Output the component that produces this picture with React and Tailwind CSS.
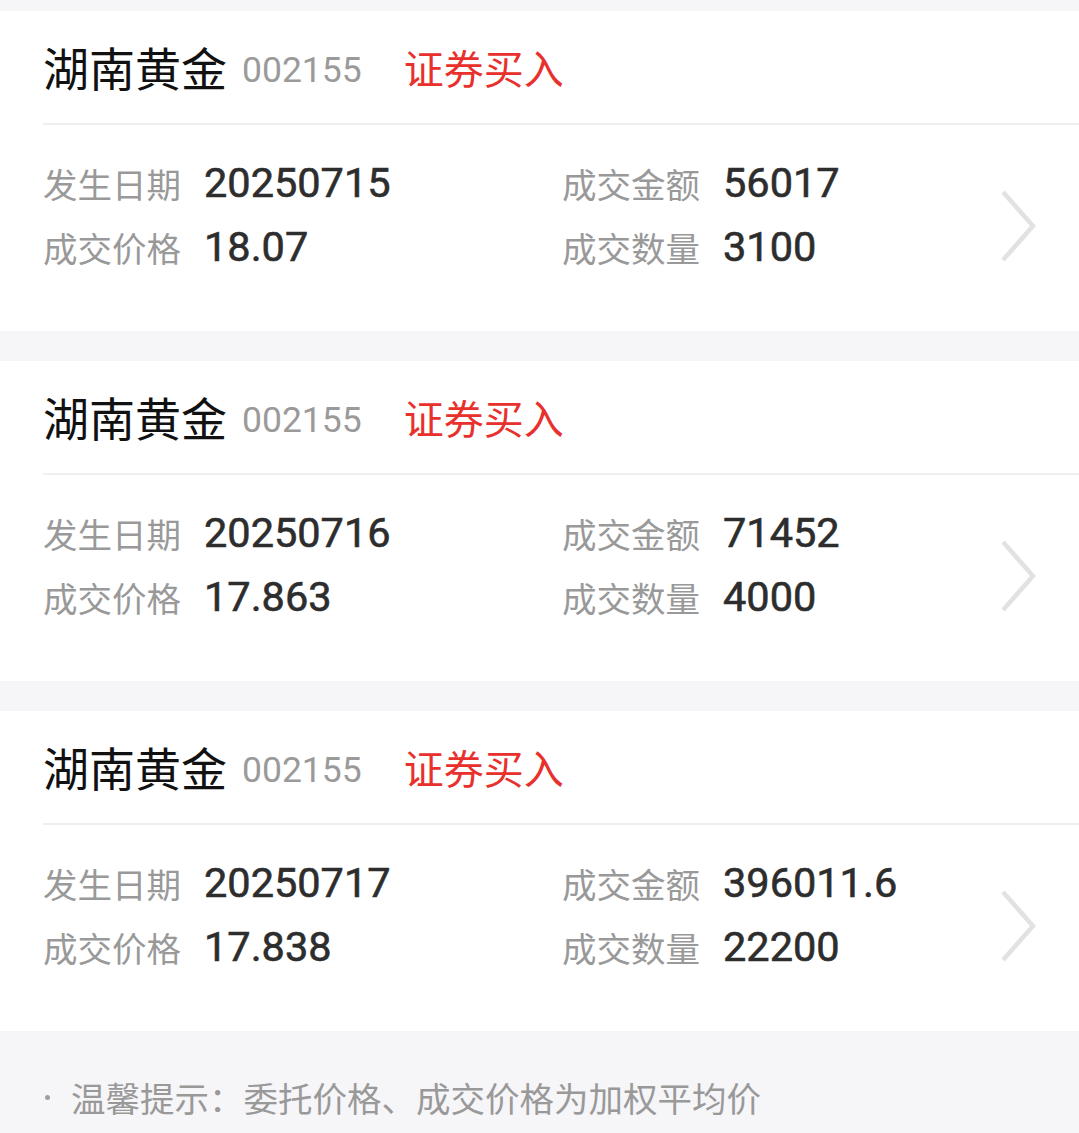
const trades = [
  { date: "20250715", amount: "56017", price: "18.07", qty: "3100" },
  { date: "20250716", amount: "71452", price: "17.863", qty: "4000" },
  { date: "20250717", amount: "396011.6", price: "17.838", qty: "22200" },
];

const font = { fontFamily: '"Noto Sans CJK SC", sans-serif' };

export default function App() {
  return (
    <div className="min-h-[1133px] w-[1079px] bg-[#f6f5f8] pt-[11px]" style={font}>
      <div className="flex flex-col gap-[30px]">
        {trades.map((t) => (
          <TradeCard key={t.date} trade={t} />
        ))}
      </div>
      <p className="mt-[42px] flex items-center pl-[45px] text-[34.5px] leading-[48px] text-[#999999]">
        <span className="mr-[21px] inline-block h-[5px] w-[5px] rounded-full bg-[#9f9f9f]" />
        温馨提示：委托价格、成交价格为加权平均价
      </p>
    </div>
  );
}

function TradeCard({ trade }) {
  return (
    <section className="h-[320px] bg-white pl-[43px]">
      <div className="flex h-[114px] items-center border-b-2 border-[#efefef] pb-[3px]">
        <span className="text-[46px] leading-none text-[#111111]">湖南黄金</span>
        <span className="ml-[15px] mt-[10px] font-['Roboto'] text-[35.5px] leading-none text-[#9a9a9a]">002155</span>
        <span className="ml-[42px] mt-[2px] text-[40px] leading-none text-[#e8302c]">证券买入</span>
      </div>
      <div className="flex items-center">
        <div className="grid flex-1 grid-cols-[519px_1fr] gap-y-[14px] pt-[33px]">
          <Field label="发生日期" value={trade.date} />
          <Field label="成交金额" value={trade.amount} />
          <Field label="成交价格" value={trade.price} />
          <Field label="成交数量" value={trade.qty} />
        </div>
        <svg width="40" height="76" viewBox="0 0 40 76" className="mr-[40px] mt-[54px]">
          <path d="M4 4 L34 38 L4 72" fill="none" stroke="#e2e2e2" strokeWidth="4.5" />
        </svg>
      </div>
    </section>
  );
}

function Field({ label, value }) {
  return (
    <div className="flex items-center leading-[50px]">
      <span className="w-[161px] text-[34.5px] text-[#999999]">{label}</span>
      <span className="font-['Roboto'] text-[41.5px] text-[#2d2d2d] [-webkit-text-stroke:0.6px_#2d2d2d]">{value}</span>
    </div>
  );
}
